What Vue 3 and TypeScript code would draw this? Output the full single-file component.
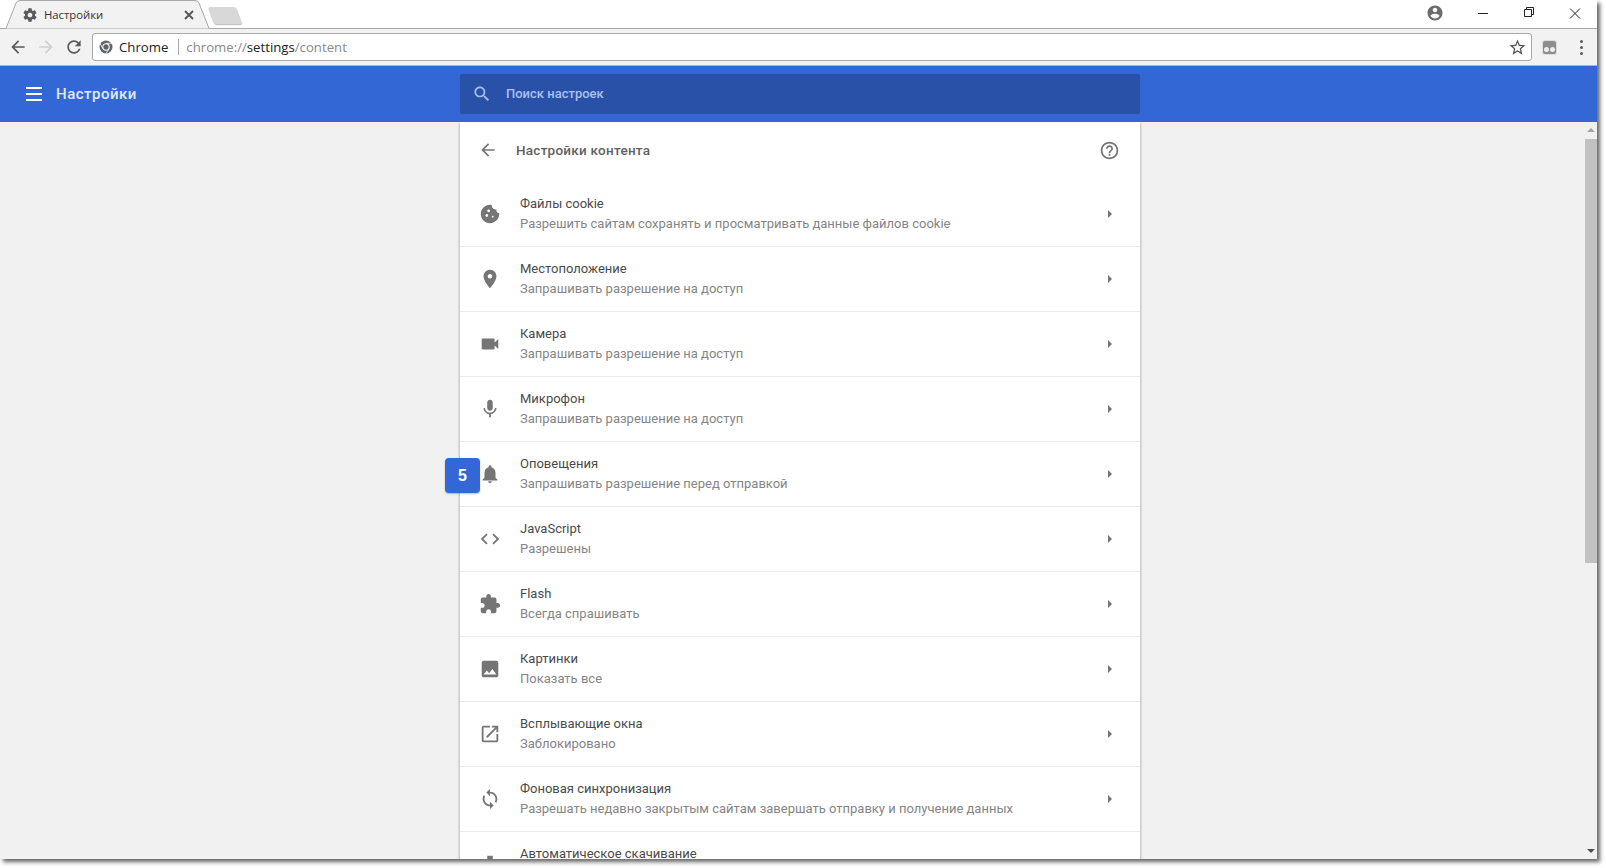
<template>
  <div class="desktop">
    <div class="window">
      <div class="strip">
        <div class="tab">
          <svg class="tab-shape" width="206" height="29" viewBox="0 0 206 29">
            <path d="M0 28.5 L6 28.5 L16 3 Q17 .5 20 .5 L195 .5 Q198 .5 199 3 L209 28.5" fill="#f2f2f2" stroke="#a8a8a8" />
          </svg>
          <svg class="tab-gear" width="16" height="16" viewBox="0 0 24 24"><path :d="icons.gear" /></svg>
          <span class="tab-title">Настройки</span>
          <svg class="tab-close" width="10" height="10" viewBox="0 0 10 10"><path d="M1 1l8 8M9 1l-8 8" /></svg>
        </div>
        <div class="new-tab"></div>
        <div class="win-controls">
          <svg class="account" width="18" height="18" viewBox="0 0 24 24"><path :d="icons.account" /></svg>
          <svg class="ctl" width="46" height="28" viewBox="0 0 46 28"><path d="M18 13.5h10" /></svg>
          <svg class="ctl" width="46" height="28" viewBox="0 0 46 28"><path d="M18.5 9.5h7v7h-7zM20.5 9.5v-2h7v7h-2" /></svg>
          <svg class="ctl" width="46" height="28" viewBox="0 0 46 28"><path d="M18 8.5l10 10M28 8.5l-10 10" /></svg>
        </div>
      </div>

      <div class="toolbar">
        <svg class="nav" width="20" height="20" viewBox="0 0 24 24"><path :d="icons.back" /></svg>
        <svg class="nav nav-off" width="20" height="20" viewBox="0 0 24 24"><path :d="icons.back" transform="matrix(-1 0 0 1 24 0)" /></svg>
        <svg class="nav" width="20" height="20" viewBox="0 0 24 24"><path :d="icons.reload" /></svg>
        <div class="omnibox">
          <svg class="chrome-logo" width="14" height="14" viewBox="0 0 14 14">
            <circle cx="7" cy="7" r="6.5" fill="#5f6368" />
            <circle cx="7" cy="7" r="3.2" fill="#5f6368" stroke="#fff" stroke-width="1.1" />
            <path d="M7 3.3h6M4 8.8L1 3.5M10 8.8L7 13.5" stroke="#fff" stroke-width=".8" />
          </svg>
          <span class="site">Chrome</span>
          <span class="sep"></span>
          <span class="url">chrome://<b>settings</b>/content</span>
          <svg class="star" width="19" height="19" viewBox="0 0 24 24"><path :d="icons.star" /></svg>
        </div>
        <div class="ext"><i></i><i></i></div>
        <div class="dots"><i></i><i></i><i></i></div>
      </div>

      <div class="appbar">
        <div class="burger"><i></i><i></i><i></i></div>
        <div class="app-title">Настройки</div>
        <div class="search">
          <svg width="20" height="20" viewBox="0 0 24 24"><path :d="icons.search" /></svg>
          <span>Поиск настроек</span>
        </div>
      </div>

      <div class="body">
        <div class="scroller">
          <div class="card">
            <div class="heading">
              <svg width="20" height="20" viewBox="0 0 24 24"><path :d="icons.back" /></svg>
              <span class="heading-text">Настройки контента</span>
              <svg class="help" width="21" height="21" viewBox="0 0 24 24"><path :d="icons.help" /></svg>
            </div>
            <div v-for="row in rows" :key="row.title" class="row">
              <svg class="row-icon" width="24" height="24" viewBox="0 0 24 24"><path :d="row.icon" /></svg>
              <div class="row-text">
                <div class="row-title">{{ row.title }}</div>
                <div class="row-sub">{{ row.sub }}</div>
              </div>
              <span class="caret"></span>
              <div v-if="row.badge" class="badge">{{ row.badge }}</div>
            </div>
          </div>
        </div>
        <div class="scrollbar">
          <span class="sb-up"></span>
          <div class="sb-thumb"></div>
          <span class="sb-down"></span>
        </div>
      </div>
    </div>
  </div>
</template>

<script setup lang="ts">
interface Row {
  title: string
  sub: string
  icon: string
  badge?: number
}

const icons = {
  gear: 'M19.43 12.98c.04-.32.07-.64.07-.98s-.03-.66-.07-.98l2.11-1.65c.19-.15.24-.42.12-.64l-2-3.46c-.12-.22-.39-.3-.61-.22l-2.49 1c-.52-.4-1.08-.73-1.69-.98l-.38-2.65C14.46 2.18 14.25 2 14 2h-4c-.25 0-.46.18-.49.42l-.38 2.65c-.61.25-1.17.59-1.69.98l-2.49-1c-.23-.09-.49 0-.61.22l-2 3.46c-.13.22-.07.49.12.64l2.11 1.65c-.04.32-.07.65-.07.98s.03.66.07.98l-2.11 1.65c-.19.15-.24.42-.12.64l2 3.46c.12.22.39.3.61.22l2.49-1c.52.4 1.08.73 1.69.98l.38 2.65c.03.24.24.42.49.42h4c.25 0 .46-.18.49-.42l.38-2.65c.61-.25 1.17-.59 1.69-.98l2.49 1c.23.09.49 0 .61-.22l2-3.46c.12-.22.07-.49-.12-.64l-2.11-1.65zM12 15.5c-1.93 0-3.5-1.57-3.5-3.5s1.57-3.5 3.5-3.5 3.5 1.57 3.5 3.5-1.57 3.5-3.5 3.5z',
  account: 'M12 2C6.48 2 2 6.48 2 12s4.48 10 10 10 10-4.48 10-10S17.52 2 12 2zm0 3c1.66 0 3 1.34 3 3s-1.34 3-3 3-3-1.34-3-3 1.34-3 3-3zm0 14.2c-2.5 0-4.71-1.28-6-3.22.03-1.99 4-3.08 6-3.08 1.99 0 5.97 1.09 6 3.08-1.29 1.94-3.5 3.22-6 3.22z',
  back: 'M20 11H7.83l5.59-5.59L12 4l-8 8 8 8 1.41-1.41L7.83 13H20v-2z',
  reload: 'M17.65 6.35C16.2 4.9 14.21 4 12 4c-4.42 0-7.99 3.58-7.99 8s3.57 8 7.99 8c3.73 0 6.84-2.55 7.73-6h-2.08c-.82 2.33-3.04 4-5.65 4-3.31 0-6-2.69-6-6s2.69-6 6-6c1.66 0 3.14.69 4.22 1.78L13 11h7V4l-2.35 2.35z',
  star: 'M22 9.24l-7.19-.62L12 2 9.19 8.63 2 9.24l5.46 4.73L5.82 21 12 17.27 18.18 21l-1.63-7.03L22 9.24zM12 15.4l-3.76 2.27 1-4.28-3.32-2.88 4.38-.38L12 6.1l1.71 4.04 4.38.38-3.32 2.88 1 4.28L12 15.4z',
  search: 'M15.5 14h-.79l-.28-.27C15.41 12.59 16 11.11 16 9.5 16 5.91 13.09 3 9.5 3S3 5.91 3 9.5 5.91 16 9.5 16c1.61 0 3.09-.59 4.23-1.57l.27.28v.79l5 4.99L20.49 19l-4.99-5zm-6 0C7.01 14 5 11.99 5 9.5S7.01 5 9.5 5 14 7.01 14 9.5 11.99 14 9.5 14z',
  help: 'M11 18h2v-2h-2v2zm1-16C6.48 2 2 6.48 2 12s4.48 10 10 10 10-4.48 10-10S17.52 2 12 2zm0 18c-4.41 0-8-3.59-8-8s3.59-8 8-8 8 3.59 8 8-3.59 8-8 8zm0-14c-2.21 0-4 1.79-4 4h2c0-1.1.9-2 2-2s2 .9 2 2c0 2-3 1.75-3 5h2c0-2.25 3-2.5 3-5 0-2.21-1.79-4-4-4z',
}

const ask = 'Запрашивать разрешение на доступ'

const rows: Row[] = [
  {
    title: 'Файлы cookie',
    sub: 'Разрешить сайтам сохранять и просматривать данные файлов cookie',
    icon: 'M21.95 10.99c-1.79-.03-3.7-1.95-2.68-4.22-2.97 1-5.78-1.59-5.19-4.56C7.11.74 2 6.41 2 12c0 5.52 4.48 10 10 10 5.89 0 10.54-5.08 9.95-11.01zM8.5 15c-.83 0-1.5-.67-1.5-1.5S7.67 12 8.5 12s1.5.67 1.5 1.5S9.33 15 8.5 15zm2-5C9.67 10 9 9.33 9 8.5S9.67 7 10.5 7s1.5.67 1.5 1.5-.67 1.5-1.5 1.5zm4.5 6c-.55 0-1-.45-1-1s.45-1 1-1 1 .45 1 1-.45 1-1 1z',
  },
  {
    title: 'Местоположение',
    sub: ask,
    icon: 'M12 2C8.13 2 5 5.13 5 9c0 5.25 7 13 7 13s7-7.75 7-13c0-3.87-3.13-7-7-7zm0 9.5c-1.38 0-2.5-1.12-2.5-2.5s1.12-2.5 2.5-2.5 2.5 1.12 2.5 2.5-1.12 2.5-2.5 2.5z',
  },
  {
    title: 'Камера',
    sub: ask,
    icon: 'M17 10.5V7c0-.55-.45-1-1-1H4c-.55 0-1 .45-1 1v10c0 .55.45 1 1 1h12c.55 0 1-.45 1-1v-3.5l4 4v-11l-4 4z',
  },
  {
    title: 'Микрофон',
    sub: ask,
    icon: 'M12 14c1.66 0 2.99-1.34 2.99-3L15 5c0-1.66-1.34-3-3-3S9 3.34 9 5v6c0 1.66 1.34 3 3 3zm5.3-3c0 3-2.54 5.1-5.3 5.1S6.7 14 6.7 11H5c0 3.41 2.72 6.23 6 6.72V21h2v-3.28c3.28-.48 6-3.3 6-6.72h-1.7z',
  },
  {
    title: 'Оповещения',
    sub: 'Запрашивать разрешение перед отправкой',
    icon: 'M12 22c1.1 0 2-.9 2-2h-4c0 1.1.89 2 2 2zm6-6v-5c0-3.07-1.64-5.64-4.5-6.32V4c0-.83-.67-1.5-1.5-1.5s-1.5.67-1.5 1.5v.68C7.63 5.36 6 7.92 6 11v5l-2 2v1h16v-1l-2-2z',
    badge: 5,
  },
  {
    title: 'JavaScript',
    sub: 'Разрешены',
    icon: 'M9.4 16.6L4.8 12l4.6-4.6L8 6l-6 6 6 6 1.4-1.4zm5.2 0l4.6-4.6-4.6-4.6L16 6l6 6-6 6-1.4-1.4z',
  },
  {
    title: 'Flash',
    sub: 'Всегда спрашивать',
    icon: 'M20.5 11H19V7c0-1.1-.9-2-2-2h-4V3.5C13 2.12 11.88 1 10.5 1S8 2.12 8 3.5V5H4c-1.1 0-1.99.9-1.99 2v3.8H3.5c1.49 0 2.7 1.21 2.7 2.7s-1.21 2.7-2.7 2.7H2V20c0 1.1.9 2 2 2h3.8v-1.5c0-1.49 1.21-2.7 2.7-2.7 1.49 0 2.7 1.21 2.7 2.7V22H17c1.1 0 2-.9 2-2v-4h1.5c1.38 0 2.5-1.12 2.5-2.5S21.88 11 20.5 11z',
  },
  {
    title: 'Картинки',
    sub: 'Показать все',
    icon: 'M21 19V5c0-1.1-.9-2-2-2H5c-1.1 0-2 .9-2 2v14c0 1.1.9 2 2 2h14c1.1 0 2-.9 2-2zM8.5 13.5l2.5 3.01L14.5 12l4.5 6H5l3.5-4.5z',
  },
  {
    title: 'Всплывающие окна',
    sub: 'Заблокировано',
    icon: 'M19 19H5V5h7V3H5c-1.11 0-2 .9-2 2v14c0 1.1.89 2 2 2h14c1.1 0 2-.9 2-2v-7h-2v7zM14 3v2h3.59l-9.83 9.83 1.41 1.41L19 6.41V10h2V3h-7z',
  },
  {
    title: 'Фоновая синхронизация',
    sub: 'Разрешать недавно закрытым сайтам завершать отправку и получение данных',
    icon: 'M12 4V1L8 5l4 4V6c3.31 0 6 2.69 6 6 0 1.01-.25 1.97-.7 2.8l1.46 1.46C19.54 15.03 20 13.57 20 12c0-4.42-3.58-8-8-8zm0 14c-3.31 0-6-2.69-6-6 0-1.01.25-1.97.7-2.8L5.24 7.74C4.46 8.97 4 10.43 4 12c0 4.42 3.58 8 8 8v3l4-4-4-4v3z',
  },
  {
    title: 'Автоматическое скачивание',
    sub: '',
    icon: 'M19 9h-4V3H9v6H5l7 7 7-7zM5 18v2h14v-2H5z',
  },
]
</script>

<style scoped>
.desktop {
  width: 1606px;
  height: 868px;
  overflow: hidden;
  background: #fff;
}

.window {
  width: 1597px;
  height: 859px;
  display: flex;
  flex-direction: column;
  overflow: hidden;
  background: #f1f1f1;
  box-shadow: 3px 3px 4px rgba(0, 0, 0, 0.6);
  font-family: Roboto, "Noto Sans", sans-serif;
}

.strip {
  height: 29px;
  flex: none;
  display: flex;
  align-items: flex-start;
  background: #fff;
  border-bottom: 1px solid #a8a8a8;
  box-sizing: border-box;
}

.tab {
  position: relative;
  width: 206px;
  height: 29px;
  flex: none;
  display: flex;
  align-items: center;
  padding-left: 22px;
  box-sizing: border-box;
}

.tab-shape {
  position: absolute;
  left: 0;
  top: 0;
  overflow: visible;
}

.tab-gear {
  position: relative;
  fill: #5a5a5a;
  margin-right: 6px;
}

.tab-title {
  position: relative;
  font-family: "Open Sans", sans-serif;
  font-size: 11.3px;
  color: #333;
}

.tab-close {
  position: absolute;
  left: 184px;
  top: 10px;
  fill: none;
  stroke: #555;
  stroke-width: 1.8;
}

.new-tab {
  width: 28px;
  height: 17px;
  margin: 7px 0 0 5px;
  flex: none;
  background: #d8d8d8;
  border-radius: 2px;
  box-shadow: 0 1px 1px #bbb;
  transform: skewX(20deg);
}

.win-controls {
  margin-left: auto;
  display: flex;
  align-items: flex-start;
}

.account {
  fill: #6b6b6b;
  margin: 4px 16px 0 0;
}

.ctl {
  fill: none;
  stroke: #222;
  stroke-width: 1;
}

.ctl:last-child {
  margin-right: -1px;
}

.toolbar {
  height: 37px;
  flex: none;
  display: flex;
  align-items: center;
  box-sizing: border-box;
  background: #f2f2f2;
  border-bottom: 1px solid #b4b4b4;
  padding-left: 8px;
}

.nav {
  fill: #5a5a5a;
  margin-right: 8px;
}

.nav-off {
  fill: #cfcfcf;
}

.omnibox {
  width: 1440px;
  height: 28px;
  flex: none;
  display: flex;
  align-items: center;
  box-sizing: border-box;
  background: #fff;
  border: 1px solid #a9a9a9;
  border-radius: 3px;
  padding: 0 4px 0 6px;
}

.chrome-logo {
  flex: none;
  margin-right: 6px;
}

.site {
  font-family: "Open Sans", sans-serif;
  font-size: 13.2px;
  color: #222;
}

.sep {
  width: 1px;
  height: 16px;
  background: #aaa;
  margin: 0 7px 0 10px;
}

.url {
  font-family: "Open Sans", sans-serif;
  font-size: 13.2px;
  color: #888;
}

.url b {
  font-weight: 400;
  color: #222;
}

.star {
  margin-left: auto;
  fill: #555;
}

.ext {
  width: 15px;
  height: 15px;
  margin-left: 10px;
  flex: none;
  display: flex;
  align-items: flex-end;
  justify-content: center;
  gap: 1px;
  padding-bottom: 2px;
  box-sizing: border-box;
  background: #8d8d8d;
  border: 1px solid #ddd;
  border-radius: 3px;
}

.ext i {
  width: 5px;
  height: 5px;
  border-radius: 50%;
  background: #eee;
}

.dots {
  display: flex;
  flex-direction: column;
  gap: 3px;
  margin-left: 23px;
}

.dots i {
  width: 3px;
  height: 3px;
  background: #5a5a5a;
  border-radius: 50%;
}

.appbar {
  position: relative;
  z-index: 1;
  height: 56px;
  flex: none;
  display: flex;
  align-items: center;
  background: #3367d6;
  padding-left: 26px;
}

.burger {
  width: 16px;
  display: flex;
  flex-direction: column;
  gap: 4px;
  margin-right: 14px;
}

.burger i {
  height: 2px;
  background: #fff;
}

.app-title {
  width: 404px;
  font-size: 15px;
  font-weight: 500;
  letter-spacing: 0.5px;
  color: #e1eafb;
}

.search {
  width: 680px;
  height: 40px;
  display: flex;
  align-items: center;
  gap: 14px;
  padding: 0 0 0 12px;
  box-sizing: border-box;
  background: #2a51a8;
  border-radius: 2px;
  fill: #a9c2f0;
  font-size: 13px;
  font-weight: 500;
  color: #a9c2f0;
}

.search span {
  margin-top: -2px;
}

.body {
  flex: 1;
  min-height: 0;
  display: flex;
}

.scroller {
  flex: 1;
  min-width: 0;
  overflow: hidden;
  padding-left: 460px;
}

.card {
  width: 680px;
  background: #fff;
  box-shadow: 0 1px 3px rgba(0, 0, 0, 0.4);
}

.heading {
  height: 60px;
  display: flex;
  align-items: center;
  padding: 0 0 4px 18px;
  fill: #757575;
  box-sizing: border-box;
}

.heading-text {
  margin-left: 18px;
  font-size: 13.5px;
  font-weight: 500;
  letter-spacing: 0.25px;
  color: #5f5f5f;
}

.help {
  margin-left: auto;
  margin-right: 20px;
}

.row {
  position: relative;
  height: 65px;
  flex: none;
  display: flex;
  align-items: center;
  box-sizing: border-box;
  padding: 0 27px 0 18px;
  border-bottom: 1px solid #ebebeb;
}

.row-icon {
  flex: none;
  fill: #757575;
  transform: scale(0.92);
}

.row-text {
  margin-left: 18px;
  font-size: 13px;
  line-height: 20px;
}

.row-title {
  color: #4a4a4a;
}

.row-sub {
  min-height: 20px;
  color: #858585;
}

.caret {
  margin-left: auto;
  margin-right: 1px;
  width: 0;
  height: 0;
  border-left: 4px solid #757575;
  border-top: 4px solid transparent;
  border-bottom: 4px solid transparent;
}

.badge {
  position: absolute;
  left: -15px;
  top: 16px;
  width: 35px;
  height: 35px;
  display: flex;
  align-items: center;
  justify-content: center;
  background: #3367d6;
  border-radius: 4px;
  box-shadow: 0 1px 2px rgba(0, 0, 0, 0.25);
  color: #fff;
  font-family: "Liberation Sans", Arial, sans-serif;
  font-size: 16px;
  font-weight: 700;
}

.scrollbar {
  position: relative;
  width: 12px;
  flex: none;
  background: #f1f1f1;
}

.sb-thumb {
  position: absolute;
  top: 17px;
  left: 0;
  width: 12px;
  height: 424px;
  background: #c1c1c1;
}

.sb-up,
.sb-down {
  position: absolute;
  left: 2px;
  width: 0;
  height: 0;
  border-left: 4px solid transparent;
  border-right: 4px solid transparent;
}

.sb-up {
  top: 6px;
  border-bottom: 4px solid #a3a3a3;
}

.sb-down {
  bottom: 6px;
  border-top: 4px solid #505050;
}
</style>
